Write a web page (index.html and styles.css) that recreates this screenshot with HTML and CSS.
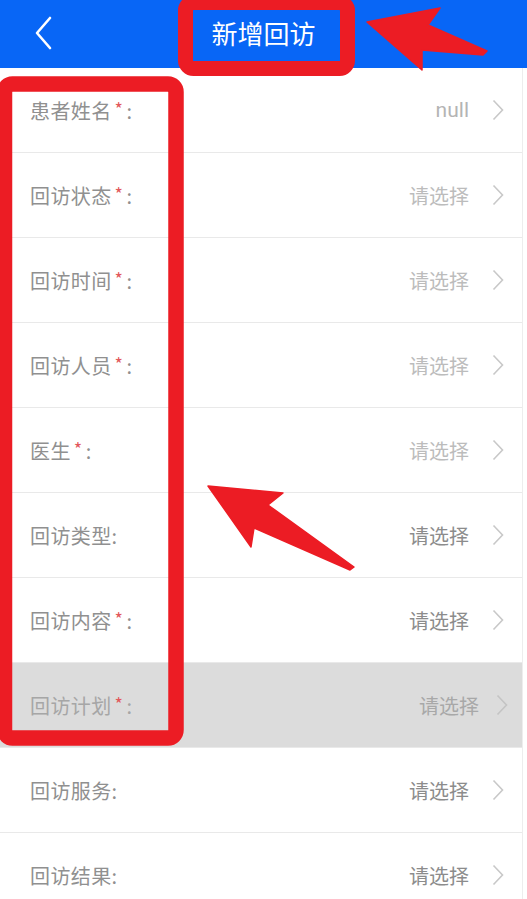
FILE: index.html
```html
<!DOCTYPE html>
<html lang="zh-CN">
<head>
<meta charset="utf-8">
<title>新增回访</title>
<link rel="stylesheet" href="styles.css">
</head>
<body>
<div class="page">
  <header class="topbar">
    <svg class="back" viewBox="0 0 20 34" width="20" height="34"><path d="M16 2 L3 17 L16 32" fill="none" stroke="#fff" stroke-width="2.6" stroke-linecap="round" stroke-linejoin="round"/></svg>
    <h1 class="title">新增回访</h1>
  </header>
  <main class="list">
    <div class="row"><span class="label">患者姓名<i class="req">*</i>:</span><span class="value faint null">null</span><svg class="chev" viewBox="0 0 12 22" width="12" height="22"><path d="M1.5 1.5 L10.5 11 L1.5 20.5" fill="none" stroke="#c8c8c8" stroke-width="1.6"/></svg></div>
    <div class="row"><span class="label">回访状态<i class="req">*</i>:</span><span class="value faint">请选择</span><svg class="chev" viewBox="0 0 12 22" width="12" height="22"><path d="M1.5 1.5 L10.5 11 L1.5 20.5" fill="none" stroke="#c8c8c8" stroke-width="1.6"/></svg></div>
    <div class="row"><span class="label">回访时间<i class="req">*</i>:</span><span class="value faint">请选择</span><svg class="chev" viewBox="0 0 12 22" width="12" height="22"><path d="M1.5 1.5 L10.5 11 L1.5 20.5" fill="none" stroke="#c8c8c8" stroke-width="1.6"/></svg></div>
    <div class="row"><span class="label">回访人员<i class="req">*</i>:</span><span class="value faint">请选择</span><svg class="chev" viewBox="0 0 12 22" width="12" height="22"><path d="M1.5 1.5 L10.5 11 L1.5 20.5" fill="none" stroke="#c8c8c8" stroke-width="1.6"/></svg></div>
    <div class="row"><span class="label">医生<i class="req">*</i>:</span><span class="value faint">请选择</span><svg class="chev" viewBox="0 0 12 22" width="12" height="22"><path d="M1.5 1.5 L10.5 11 L1.5 20.5" fill="none" stroke="#c8c8c8" stroke-width="1.6"/></svg></div>
    <div class="row"><span class="label">回访类型:</span><span class="value">请选择</span><svg class="chev" viewBox="0 0 12 22" width="12" height="22"><path d="M1.5 1.5 L10.5 11 L1.5 20.5" fill="none" stroke="#c8c8c8" stroke-width="1.6"/></svg></div>
    <div class="row"><span class="label">回访内容<i class="req">*</i>:</span><span class="value">请选择</span><svg class="chev" viewBox="0 0 12 22" width="12" height="22"><path d="M1.5 1.5 L10.5 11 L1.5 20.5" fill="none" stroke="#c8c8c8" stroke-width="1.6"/></svg></div>
    <div class="row pressed"><span class="label">回访计划<i class="req">*</i>:</span><span class="value">请选择</span><svg class="chev" viewBox="0 0 12 22" width="12" height="22"><path d="M1.5 1.5 L10.5 11 L1.5 20.5" fill="none" stroke="#c4c4c4" stroke-width="1.6"/></svg></div>
    <div class="row"><span class="label">回访服务:</span><span class="value">请选择</span><svg class="chev" viewBox="0 0 12 22" width="12" height="22"><path d="M1.5 1.5 L10.5 11 L1.5 20.5" fill="none" stroke="#c8c8c8" stroke-width="1.6"/></svg></div>
    <div class="row"><span class="label">回访结果:</span><span class="value">请选择</span><svg class="chev" viewBox="0 0 12 22" width="12" height="22"><path d="M1.5 1.5 L10.5 11 L1.5 20.5" fill="none" stroke="#c8c8c8" stroke-width="1.6"/></svg></div>
  </main>
  <svg class="marks" viewBox="0 0 527 899" width="527" height="899">
    <rect x="185.5" y="2.5" width="162" height="66" rx="8" fill="none" stroke="#ec1c24" stroke-width="15"/>
    <rect x="4.5" y="84" width="171.5" height="654" rx="8" fill="none" stroke="#ec1c24" stroke-width="15.5"/>
    <polygon points="367,22 440,8 428,25 487,51 483,55 422,50 422,70" fill="#ec1c24" stroke="#ec1c24" stroke-width="1.5" stroke-linejoin="round"/>
    <polygon points="208,486 283,493 268,505 354,567 350,570 254,528 251,547" fill="#ec1c24" stroke="#ec1c24" stroke-width="1.5" stroke-linejoin="round"/>
  </svg>
</div>
</body>
</html>
```
FILE: styles.css
```css
html, body {
  margin: 0;
  padding: 0;
  background: #ffffff;
}
body {
  font-family: "Noto Sans CJK SC", "Noto Sans", "Liberation Sans", sans-serif;
}
.page {
  position: relative;
  width: 527px;
  height: 899px;
  overflow: hidden;
  background: #ffffff;
}
.topbar {
  height: 68px;
  background: #0866f6;
  display: flex;
  align-items: center;
  justify-content: center;
  position: relative;
}
.back {
  position: absolute;
  left: 34px;
  top: 16px;
}
.title {
  margin: 0;
  font-size: 26px;
  font-weight: 400;
  color: #ffffff;
  line-height: 1;
  padding-bottom: 2px;
}
.list {
  margin-right: 4px;
  border-right: 1px solid #ededed;
}
.row {
  height: 84px;
  border-bottom: 1px solid #e9e9e9;
  display: flex;
  align-items: center;
  padding: 0 18px 0 30px;
  font-size: 20px;
  color: #909090;
}
.label {
  flex: 1;
  white-space: nowrap;
  letter-spacing: 0.4px;
}
.req {
  font-style: normal;
  color: #e2575a;
  font-size: 18px;
  position: relative;
  top: -3px;
  margin: 0 3px 0 3px;
}
.value {
  color: #8c8c8c;
  margin-right: 23px;
}
.value.faint {
  color: #bcbcbc;
}
.value.null {
  font-family: Roboto, "Noto Sans", sans-serif;
  font-size: 21px;
  color: #b4b4b4;
}
.chev {
  display: block;
}
.pressed {
  background: #dcdcdc;
  color: #a6a6a6;
  padding-right: 14px;
}
.pressed .value {
  color: #a8a8a8;
  margin-right: 17px;
}
.marks {
  position: absolute;
  left: 0;
  top: 0;
  pointer-events: none;
}
```
